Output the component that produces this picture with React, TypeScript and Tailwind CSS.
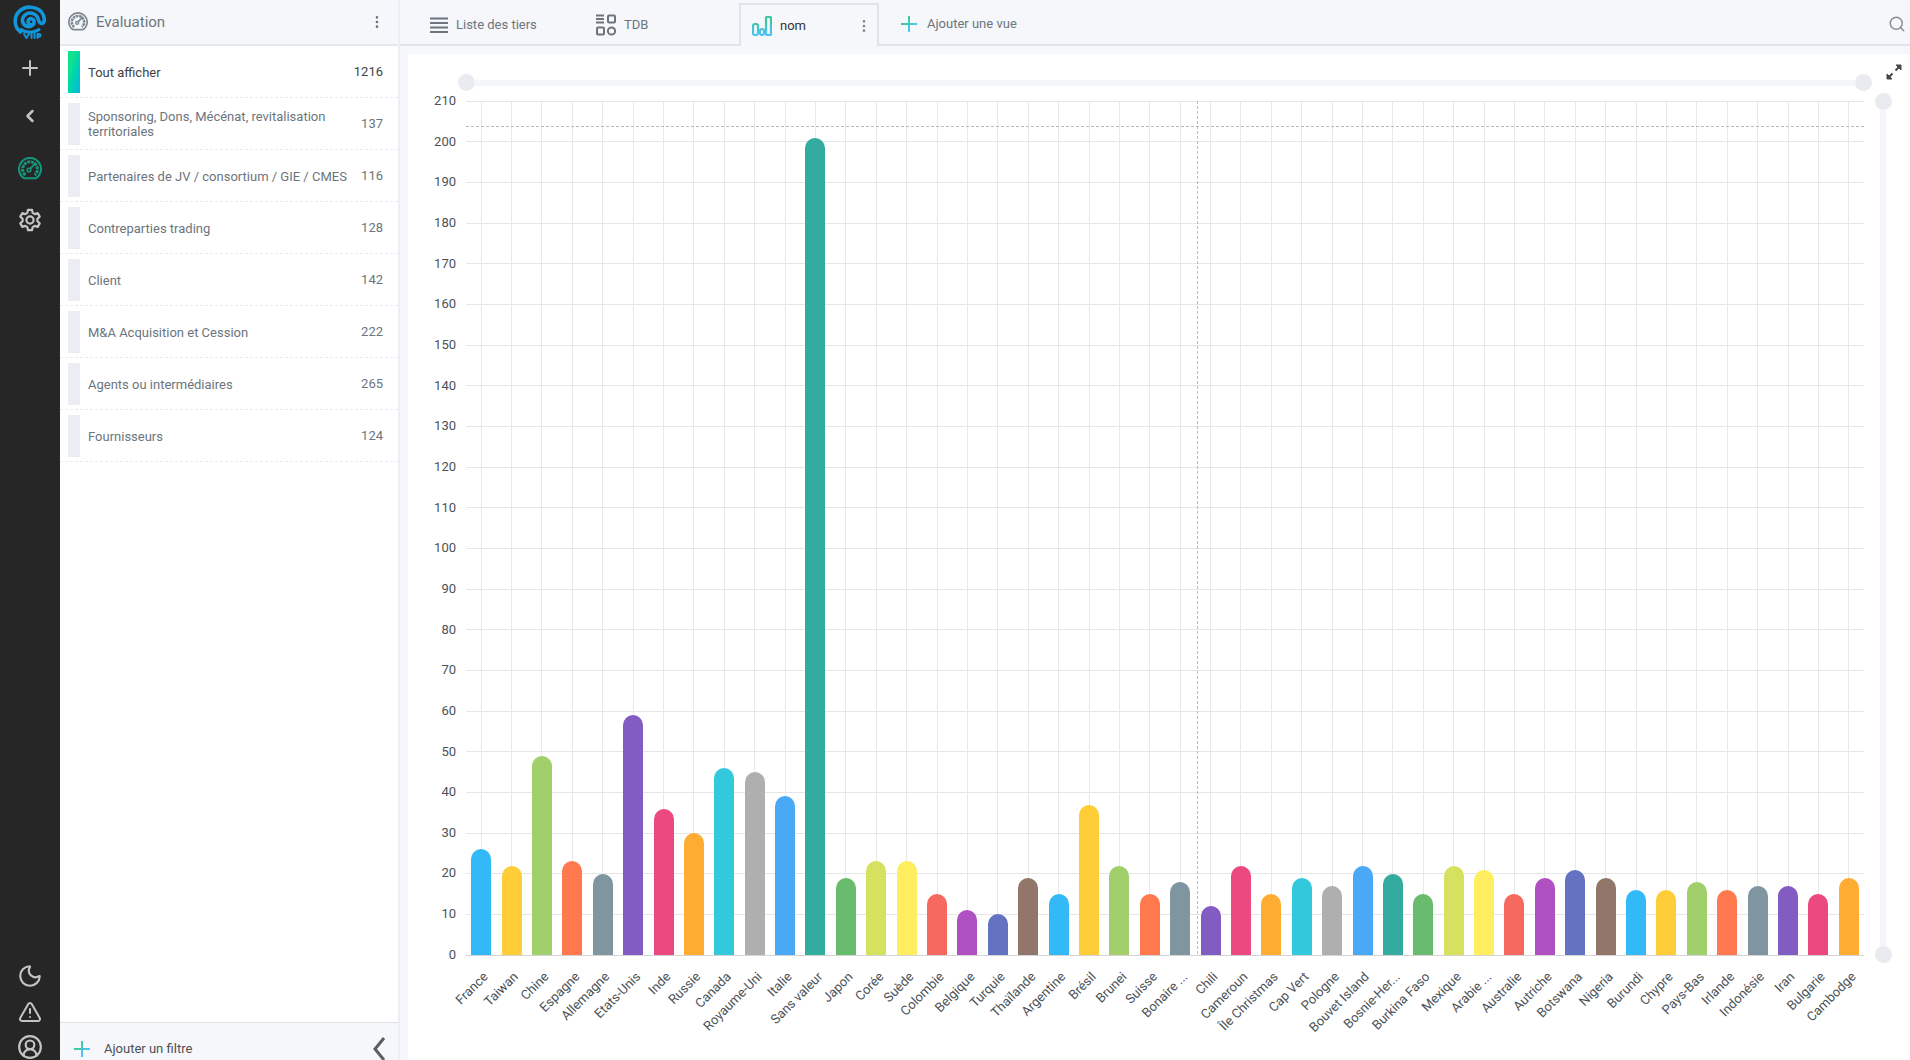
import { ReactNode } from "react";
import { ChevronLeft, MoreVertical, Moon, Plus, Search, TriangleAlert, CircleUserRound } from "lucide-react";

const filters = [
  { label: "Tout afficher", count: 1216 },
  { label: "Sponsoring, Dons, Mécénat, revitalisation territoriales", count: 137 },
  { label: "Partenaires de JV / consortium / GIE / CMES", count: 116 },
  { label: "Contreparties trading", count: 128 },
  { label: "Client", count: 142 },
  { label: "M&A Acquisition et Cession", count: 222 },
  { label: "Agents ou intermédiaires", count: 265 },
  { label: "Fournisseurs", count: 124 },
];

const palette = [
  "bg-[#33b9f7]", "bg-[#ffcd38]", "bg-[#a0cf6c]", "bg-[#ff784e]", "bg-[#7f95a0]", "bg-[#835cc3]",
  "bg-[#ec4981]", "bg-[#ffac33]", "bg-[#33c9dc]", "bg-[#afafaf]", "bg-[#49a9f6]", "bg-[#33ab9f]",
  "bg-[#69bc6d]", "bg-[#d6e25f]", "bg-[#ffef60]", "bg-[#f6695e]", "bg-[#af51c1]", "bg-[#6473c1]",
  "bg-[#927669]",
];

const countries: [string, number][] = [
  ["France", 26], ["Taiwan", 22], ["Chine", 49], ["Espagne", 23], ["Allemagne", 20], ["Etats-Unis", 59],
  ["Inde", 36], ["Russie", 30], ["Canada", 46], ["Royaume-Uni", 45], ["Italie", 39], ["Sans valeur", 201],
  ["Japon", 19], ["Corée", 23], ["Suède", 23], ["Colombie", 15], ["Belgique", 11], ["Turquie", 10],
  ["Thaïlande", 19], ["Argentine", 15], ["Brésil", 37], ["Brunei", 22], ["Suisse", 15], ["Bonaire ...", 18],
  ["Chili", 12], ["Cameroun", 22], ["Île Christmas", 15], ["Cap Vert", 19], ["Pologne", 17],
  ["Bouvet Island", 22], ["Bosnie-Her...", 20], ["Burkina Faso", 15], ["Mexique", 22], ["Arabie ...", 21],
  ["Australie", 15], ["Autriche", 19], ["Botswana", 21], ["Nigeria", 19], ["Burundi", 16], ["Chypre", 16],
  ["Pays-Bas", 18], ["Irlande", 16], ["Indonésie", 17], ["Iran", 17], ["Bulgarie", 15], ["Cambodge", 19],
];

const MAX = 210;
const ticks = Array.from({ length: 22 }, (_, i) => MAX - i * 10);

function Gauge({ className }: { className: string }) {
  return (
    <svg viewBox="0 0 24 24" className={className} fill="none" stroke="currentColor" aria-hidden="true">
      <path d="M6 21.2a11 11 0 1 1 12 0Z" strokeWidth="2" strokeLinejoin="round" />
      <path d="M7.4 18a7.4 7.4 0 1 1 9.2 0" strokeWidth="3" strokeDasharray="3 0.8" />
      <circle cx="11" cy="13" r="1.8" strokeWidth="1.6" />
      <path d="m12.3 11.6 5-5.2" strokeWidth="2" strokeLinecap="round" />
    </svg>
  );
}

function Gear() {
  return (
    <svg viewBox="0 0 24 24" className="size-6" fill="none" stroke="currentColor" strokeWidth="2.2" strokeLinejoin="round" aria-hidden="true">
      <path d="M10 1.8h4l.7 3.1 2 1.2 3-1 2 3.5-2.3 2.2v2.4l2.3 2.2-2 3.5-3-1-2 1.2-.7 3.1h-4l-.7-3.1-2-1.2-3 1-2-3.5 2.3-2.2v-2.4L2.3 8.6l2-3.5 3 1 2-1.2Z" />
      <circle cx="12" cy="12" r="3.6" />
    </svg>
  );
}

function Logo() {
  return (
    <svg viewBox="0 0 34 34" className="size-[34px]" fill="none" stroke="#1296db" strokeLinecap="round" aria-hidden="true">
      <path d="M17 19.5a3 3 0 1 1 4-3.5c.6 3.500-2.500 6-6 5.500-5.500-.8-7-6.500-4-10.500 4-4.800 12-3.500 14 2.500 1 3.500 2 5.500 4.500 5 3-1.500 2-7.500-1-11.500C23 .8 12 .5 6 6.500.5 12.500 1 22 7.500 27" strokeWidth="3.6" />
      <path d="M8 24.500c4.500 3.500 13 3.500 18 0" strokeWidth="3" />
      <path d="m11 29 2.500 4 2.500-4m2.500 0v4m3-4v4m3-4v4m0-4c4-.5 4 3 0 3" strokeWidth="2" />
    </svg>
  );
}

function GradientPlus() {
  return (
    <svg viewBox="0 0 16 16" className="size-4 shrink-0" aria-hidden="true">
      <defs>
        <linearGradient id="plus" x1="0" y1="0" x2="1" y2="1">
          <stop offset="0.3" stopColor="#3ec9a0" />
          <stop offset="0.7" stopColor="#4cc4f2" />
        </linearGradient>
      </defs>
      <path d="M7 0h2v7h7v2H9v7H7V9H0V7h7Z" fill="url(#plus)" />
    </svg>
  );
}

function Dots() {
  return <MoreVertical className="size-4" strokeWidth={2} />;
}

function RailButton({ label, children, className }: { label: string; children: ReactNode; className: string }) {
  return (
    <button aria-label={label} className={`flex w-full items-center justify-center ${className}`}>
      {children}
    </button>
  );
}

function Rail() {
  return (
    <nav className="flex w-[60px] shrink-0 flex-col justify-between bg-[#262626] text-[#c4c4c4]">
      <div>
        <a href="#accueil" aria-label="Accueil" className="flex h-11 items-center justify-center">
          <Logo />
        </a>
        <RailButton label="Ajouter" className="h-12"><Plus className="size-6" strokeWidth={2} /></RailButton>
        <RailButton label="Retour" className="h-12"><ChevronLeft className="size-5" strokeWidth={3} /></RailButton>
        <RailButton label="Evaluation" className="mt-1 h-[50px] text-[#14967a]"><Gauge className="size-6" /></RailButton>
        <RailButton label="Paramètres" className="h-[52px]"><Gear /></RailButton>
      </div>
      <div>
        <RailButton label="Mode sombre" className="h-9"><Moon className="size-[26px]" strokeWidth={2} /></RailButton>
        <RailButton label="Alertes" className="h-9"><TriangleAlert className="size-6" strokeWidth={2} /></RailButton>
        <RailButton label="Profil" className="h-[30px] pt-1"><CircleUserRound className="size-[26px]" strokeWidth={2} /></RailButton>
      </div>
    </nav>
  );
}

function Sidebar() {
  return (
    <aside className="flex w-[340px] shrink-0 flex-col border-r-2 border-[#eceef5] bg-white text-[13px] text-[#6c757d]">
      <header className="flex h-[46px] shrink-0 items-center gap-2 border-b-2 border-[#e6e8ee] bg-[#f6f7fa] pr-[13px] pl-2">
        <Gauge className="size-5 text-[#7b8791]" />
        <h1 className="flex-1 text-[15px]">Evaluation</h1>
        <button aria-label="Options"><Dots /></button>
      </header>
      <ul className="flex-1">
        {filters.map((f, i) => (
          <li key={f.label} className="h-[52px] border-b border-dashed border-[#e9ebf2]">
            <button className="flex size-full items-center pt-px pr-[15px] pl-2 text-left">
              <span className={i === 0 ? "h-[42px] w-3 bg-linear-to-br from-[#0fe38f] from-30% to-[#12b4e0]" : "h-[42px] w-3 bg-[#ecedf2]"} />
              <span className={i === 0 ? "flex-1 pl-2 leading-[15px] text-[#3f4347]" : "flex-1 pl-2 leading-[15px]"}>{f.label}</span>
              <span className={i === 0 ? "text-[#3f4347]" : ""}>{f.count}</span>
            </button>
          </li>
        ))}
      </ul>
      <footer className="h-[38px] shrink-0 overflow-hidden border-t border-[#e0e2e8] bg-[#f6f7fa]">
        <div className="flex h-[52px] items-center justify-between pr-3 pl-[14px] text-[#4b5055]">
          <button className="flex items-center gap-[14px]"><GradientPlus />Ajouter un filtre</button>
          <button aria-label="Réduire le panneau">
            <svg viewBox="0 0 14 24" className="h-6 w-[14px]" fill="none" stroke="#5a5e63" strokeWidth="3" aria-hidden="true">
              <path d="M12 1 3 12l9 11" />
            </svg>
          </button>
        </div>
      </footer>
    </aside>
  );
}

function Tabs() {
  return (
    <div className="flex h-[46px] shrink-0 items-stretch text-[13px] text-[#6c757d]">
      <button className="flex w-[166px] items-center gap-2 border-b-2 border-[#e0e3ea] pt-[6px] pl-[30px]">
        <svg viewBox="0 0 18 16" className="h-4 w-[18px]" stroke="currentColor" strokeWidth="2" aria-hidden="true">
          <path d="M0 1.5h18M0 6h18M0 10.5h18M0 15h18" />
        </svg>
        Liste des tiers
      </button>
      <button className="flex w-[173px] items-center gap-2 border-b-2 border-[#e0e3ea] pt-[6px] pl-[30px]">
        <svg viewBox="0 0 20 22" className="h-[22px] w-5" fill="none" stroke="currentColor" strokeWidth="2" aria-hidden="true">
          <path d="M0 1.5h8M0 5h8M0 8.5h8" />
          <rect x="12" y="1.5" width="7" height="7" rx="1" />
          <rect x="1" y="13.5" width="7" height="7" rx="1" />
          <circle cx="15.5" cy="17" r="3.6" />
        </svg>
        TDB
      </button>
      <div className="mt-[3px] flex w-[140px] items-center border-x-2 border-t-2 border-[#e0e3ea] pr-[5px] pl-[11px] text-[#303438]">
        <button className="flex flex-1 items-center gap-2">
          <svg viewBox="0 0 20 20" className="size-5" fill="none" stroke="url(#bars)" strokeWidth="2.2" aria-hidden="true">
            <defs>
              <linearGradient id="bars" x1="0" y1="0" x2="0" y2="20" gradientUnits="userSpaceOnUse">
                <stop offset="0.3" stopColor="#3fc4a4" />
                <stop offset="0.9" stopColor="#4cc4f6" />
              </linearGradient>
            </defs>
            <rect x="1" y="8" width="5" height="11" rx="2" />
            <rect x="8" y="13" width="4" height="6" rx="2" />
            <rect x="14" y="1" width="5" height="18" rx="1" />
          </svg>
          nom
        </button>
        <button aria-label="Options de la vue" className="text-[#7b8791]"><Dots /></button>
      </div>
      <div className="flex flex-1 items-center justify-between border-b-2 border-[#e0e3ea] pt-[3px] pr-1 pl-[22px]">
        <button className="flex items-center gap-[10px]"><GradientPlus />Ajouter une vue</button>
        <button aria-label="Rechercher"><Search className="size-[18px] text-[#8a8f94]" strokeWidth={2} /></button>
      </div>
    </div>
  );
}

function Knob() {
  return <span className="size-[17px] shrink-0 rounded-full bg-[#e9ebf1]" />;
}

function Grid() {
  return (
    <svg className="absolute inset-0 size-full overflow-visible" shapeRendering="crispEdges" aria-hidden="true">
      {ticks.map((t) => (
        <line key={t} x1="0" x2="100%" y1={`${((MAX - t) / MAX) * 100}%`} y2={`${((MAX - t) / MAX) * 100}%`} stroke={t === 0 ? "#d4d4d4" : "#e6e6e6"} />
      ))}
      {countries.map(([name], i) => (
        <line key={name} y1="0" y2="100%" x1={`${((i + 0.5) / countries.length) * 100}%`} x2={`${((i + 0.5) / countries.length) * 100}%`} stroke="#e8e8e8" />
      ))}
      <line x1="0" x2="100%" y1="3%" y2="3%" stroke="#bcbcbc" strokeDasharray="3 2" />
      <line x1="52.3%" x2="52.3%" y1="0" y2="100%" stroke="#bcbcbc" strokeDasharray="3 2" />
    </svg>
  );
}

function Chart() {
  return (
    <section aria-label="Tiers par pays" className="mt-2 ml-2 grid min-h-0 flex-1 grid-cols-[58px_minmax(0,1fr)_46px] grid-rows-[47px_minmax(0,1fr)_105px] bg-white text-[13px] text-[#4c5258]">
      <div />
      <div className="-mx-2 mt-5 flex h-[17px] items-center">
        <Knob />
        <span className="h-[6px] flex-1 bg-[#f5f6f9]" />
        <Knob />
      </div>
      <button aria-label="Plein écran" className="mt-[10px] mr-2 size-4 self-start justify-self-end">
        <svg viewBox="0 0 16 16" className="size-4" fill="#45484c" stroke="#45484c" strokeWidth="2" aria-hidden="true">
          <path d="M10 1h5v5ZM6 15H1v-5Z" strokeWidth="1" />
          <path d="m14 2-4.500 4.500M2 14l4.500-4.500" />
        </svg>
      </button>

      <div className="-my-2 flex flex-col justify-between pr-[10px] text-right leading-4">
        {ticks.map((t) => <span key={t}>{t}</span>)}
      </div>
      <div className="relative flex items-stretch">
        <Grid />
        {countries.map(([name, value], i) => (
          <div key={name} className="relative flex flex-1 items-end justify-center">
            <div
              className={`w-5 rounded-t-full ${palette[i % palette.length]}`}
              style={{ height: `${(value / MAX) * 100}%` }}
            />
          </div>
        ))}
      </div>
      <div className="-my-2 flex flex-col items-center pr-2">
        <Knob />
        <span className="w-[6px] flex-1 bg-[#f5f6f9]" />
        <Knob />
      </div>

      <div />
      <div className="flex pt-[14px]">
        {countries.map(([name]) => (
          <div key={name} className="flex w-0 flex-1 justify-end">
            <span className="mr-4 h-4 origin-top-right -rotate-45 leading-4 whitespace-nowrap">{name}</span>
          </div>
        ))}
      </div>
    </section>
  );
}

export default function App() {
  return (
    <div className="flex h-screen overflow-hidden bg-[#f6f7fa] font-[Roboto,sans-serif]">
      <Rail />
      <Sidebar />
      <main className="flex min-w-0 flex-1 flex-col">
        <Tabs />
        <Chart />
      </main>
    </div>
  );
}
